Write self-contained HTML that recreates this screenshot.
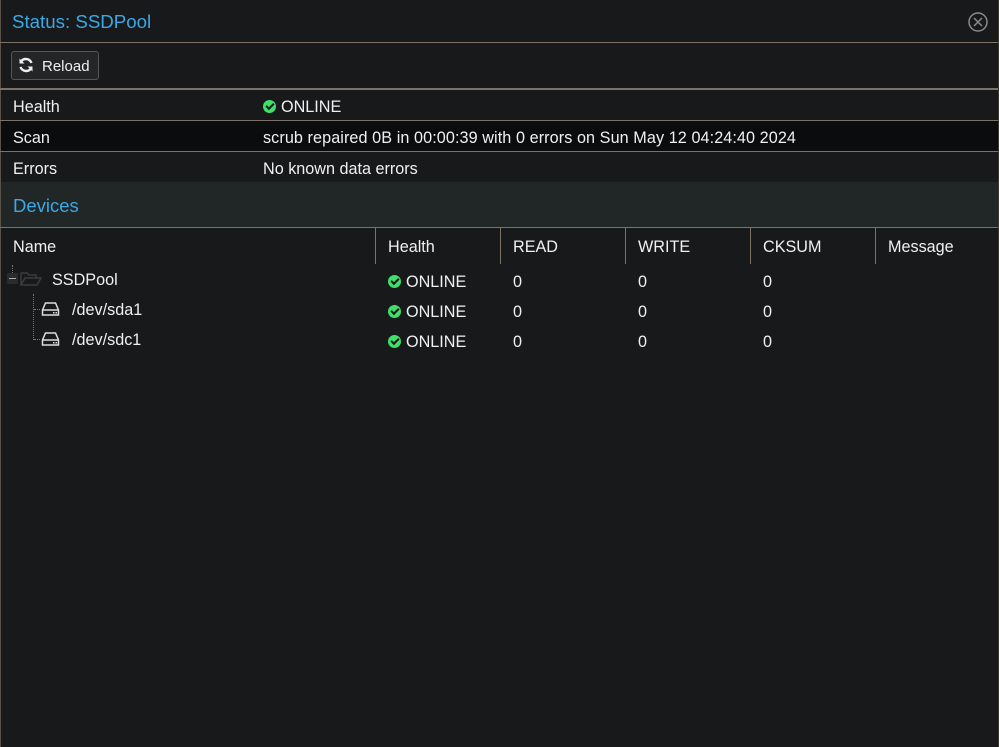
<!DOCTYPE html>
<html><head><style>
body{margin:0;width:999px;height:747px;background:#18191b;font-family:"Liberation Sans",sans-serif;color:#f0f0f0;position:relative;overflow:hidden;font-size:16.2px}
.a{position:absolute}
.hl{position:absolute;left:0;width:998px;height:1px;background:#7d7266}
.t{position:absolute;white-space:nowrap}
.vs{position:absolute;top:228px;height:36px;width:1px;background:#7d7266}
.ok{display:inline-block;width:13px;height:13px;border-radius:50%;background:#3ee06a;vertical-align:-1px;margin-right:5px;position:relative}
.ok:after{content:"";position:absolute;left:3px;top:3px;width:6px;height:3px;border-left:2px solid #18191b;border-bottom:2px solid #18191b;transform:rotate(-45deg)}
</style></head><body>
<div class="a" style="left:0;top:0;width:1px;height:747px;background:#5a5249"></div>
<div class="a" style="left:998px;top:0;width:1px;height:747px;background:#3a3631"></div>
<div class="t" style="left:12px;top:11px;font-size:18.7px;color:#3aa9e6">Status: SSDPool</div>
<svg class="a" style="left:968px;top:12px" width="20" height="20" viewBox="0 0 20 20"><circle cx="10" cy="10" r="9" fill="none" stroke="#8a8a8a" stroke-width="1.5"/><path d="M6 6L14 14M14 6L6 14" stroke="#8a8a8a" stroke-width="1.5"/></svg>
<div class="hl" style="top:42px"></div>
<div class="a" style="left:11px;top:51px;width:86px;height:27px;border:1px solid #555;border-radius:3px;background:#232527"></div>
<svg class="a" style="left:18px;top:57px" width="16" height="16" viewBox="0 0 16 16"><path d="M13.5 6A6 6 0 0 0 3 4.5" fill="none" stroke="#eee" stroke-width="2.4"/><path d="M1.5 1.5V6.5H6.5Z" fill="#eee"/><path d="M2.5 10A6 6 0 0 0 13 11.5" fill="none" stroke="#eee" stroke-width="2.4"/><path d="M14.5 14.5V9.5H9.5Z" fill="#eee"/></svg>
<div class="t" style="left:42px;top:58px;font-size:15px">Reload</div>
<div class="hl" style="top:88px;height:2px"></div>
<div class="t" style="left:13px;top:98px">Health</div>
<div class="t" style="left:263px;top:98px"><span class="ok"></span>ONLINE</div>
<div class="hl" style="top:120px"></div>
<div class="a" style="left:1px;top:121px;width:997px;height:30px;background:#0b0c0d"></div>
<div class="t" style="left:13px;top:129px">Scan</div>
<div class="t" style="left:263px;top:129px;letter-spacing:0.08px">scrub repaired 0B in 00:00:39 with 0 errors on Sun May 12 04:24:40 2024</div>
<div class="hl" style="top:151px"></div>
<div class="t" style="left:13px;top:160px">Errors</div>
<div class="t" style="left:263px;top:160px">No known data errors</div>
<div class="a" style="left:1px;top:182px;width:997px;height:45px;background:#212627"></div>
<div class="t" style="left:13px;top:195px;font-size:18.5px;color:#3aa9e6">Devices</div>
<div class="hl" style="top:227px"></div>
<div class="vs" style="left:375px"></div><div class="vs" style="left:500px"></div><div class="vs" style="left:625px"></div><div class="vs" style="left:750px"></div><div class="vs" style="left:875px"></div>
<div class="t" style="left:13px;top:238px">Name</div>
<div class="t" style="left:388px;top:238px">Health</div>
<div class="t" style="left:513px;top:238px">READ</div>
<div class="t" style="left:638px;top:238px">WRITE</div>
<div class="t" style="left:763px;top:238px">CKSUM</div>
<div class="t" style="left:888px;top:238px">Message</div>
<div class="a" style="left:12px;top:265px;width:1px;height:8px;border-left:1px dotted #777"></div>
<div class="a" style="left:7px;top:273px;width:11px;height:11px;background:#2a2b2d"></div>
<div class="a" style="left:9px;top:278px;width:7px;height:1px;background:#aaa"></div>
<svg class="a" style="left:20px;top:271px" width="22" height="16" viewBox="0 0 22 16"><path d="M1 14V2H7L9 4H16V7M1 14L5 7H21L17 14Z" fill="none" stroke="#3a3c3e" stroke-width="1.5"/></svg>
<div class="t" style="left:52px;top:271px">SSDPool</div>
<div class="a" style="left:33px;top:294px;width:1px;height:46px;border-left:1px dotted #777"></div>
<div class="a" style="left:34px;top:309px;width:6px;border-top:1px dotted #777"></div>
<div class="a" style="left:34px;top:339px;width:6px;border-top:1px dotted #777"></div>
<svg class="a" style="left:41px;top:301px" width="20" height="16" viewBox="0 0 20 16"><path d="M1.5 9L4.5 2H14.5L17.5 9V14H1.5Z M1.5 9H17.5" fill="none" stroke="#ddd" stroke-width="1.5"/><rect x="12" y="11" width="1.5" height="1.5" fill="#ddd"/><rect x="14.5" y="11" width="1.5" height="1.5" fill="#ddd"/></svg>
<svg class="a" style="left:41px;top:331px" width="20" height="16" viewBox="0 0 20 16"><path d="M1.5 9L4.5 2H14.5L17.5 9V14H1.5Z M1.5 9H17.5" fill="none" stroke="#ddd" stroke-width="1.5"/><rect x="12" y="11" width="1.5" height="1.5" fill="#ddd"/><rect x="14.5" y="11" width="1.5" height="1.5" fill="#ddd"/></svg>
<div class="t" style="left:72px;top:301px">/dev/sda1</div>
<div class="t" style="left:72px;top:331px">/dev/sdc1</div>
<div class="t" style="left:388px;top:273px"><span class="ok"></span>ONLINE</div>
<div class="t" style="left:388px;top:303px"><span class="ok"></span>ONLINE</div>
<div class="t" style="left:388px;top:333px"><span class="ok"></span>ONLINE</div>
<div class="t" style="left:513px;top:273px">0</div><div class="t" style="left:638px;top:273px">0</div><div class="t" style="left:763px;top:273px">0</div>
<div class="t" style="left:513px;top:303px">0</div><div class="t" style="left:638px;top:303px">0</div><div class="t" style="left:763px;top:303px">0</div>
<div class="t" style="left:513px;top:333px">0</div><div class="t" style="left:638px;top:333px">0</div><div class="t" style="left:763px;top:333px">0</div>
</body></html>
